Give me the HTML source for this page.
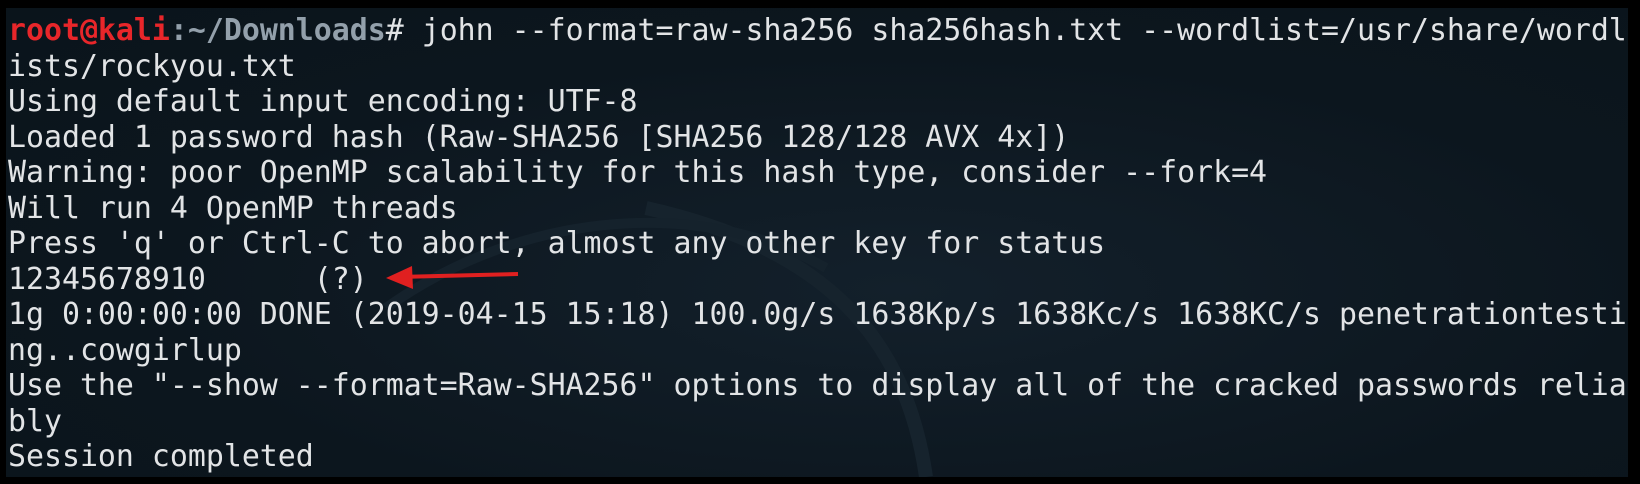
<!DOCTYPE html>
<html><head><meta charset="utf-8"><style>
html,body{margin:0;padding:0;background:#000;}
body{width:1640px;height:484px;overflow:hidden;position:relative;}
.term{position:absolute;left:6px;top:8px;width:1622px;height:469px;background:radial-gradient(ellipse at 55% 60%,#13202b 0%,#0c161e 60%,#0a141b 100%);overflow:hidden;}
pre{margin:0;position:absolute;left:2px;top:5px;font-family:"DejaVu Sans Mono","Liberation Mono",monospace;font-size:29.88px;line-height:35.5px;color:#e2e4e6;white-space:pre;}
.r{color:#e8262a;font-weight:bold}
.b{color:#93a0ab;font-weight:bold}
svg{position:absolute;left:0;top:0}
</style></head><body>
<div class="term">
<svg width="1622" height="469"><path d="M640 200 C820 240 900 330 920 469" stroke="#16232d" stroke-width="14" fill="none"/><path d="M380 300 C520 200 700 190 820 260" stroke="#15222c" stroke-width="10" fill="none"/></svg>
<pre><span class="r">root@kali</span><span class="b">:~/Downloads</span># john --format=raw-sha256 sha256hash.txt --wordlist=/usr/share/wordl
ists/rockyou.txt
Using default input encoding: UTF-8
Loaded 1 password hash (Raw-SHA256 [SHA256 128/128 AVX 4x])
Warning: poor OpenMP scalability for this hash type, consider --fork=4
Will run 4 OpenMP threads
Press 'q' or Ctrl-C to abort, almost any other key for status
12345678910      (?)
1g 0:00:00:00 DONE (2019-04-15 15:18) 100.0g/s 1638Kp/s 1638Kc/s 1638KC/s penetrationtesti
ng..cowgirlup
Use the "--show --format=Raw-SHA256" options to display all of the cracked passwords relia
bly
Session completed</pre>
<svg width="1622" height="469" style="position:absolute;left:0;top:0"><path d="M512 266 L392 269" stroke="#e02020" stroke-width="4" fill="none"/><path d="M406 258 L380 270 L407 281 Z" fill="#e02020"/></svg>
</div>
</body></html>
